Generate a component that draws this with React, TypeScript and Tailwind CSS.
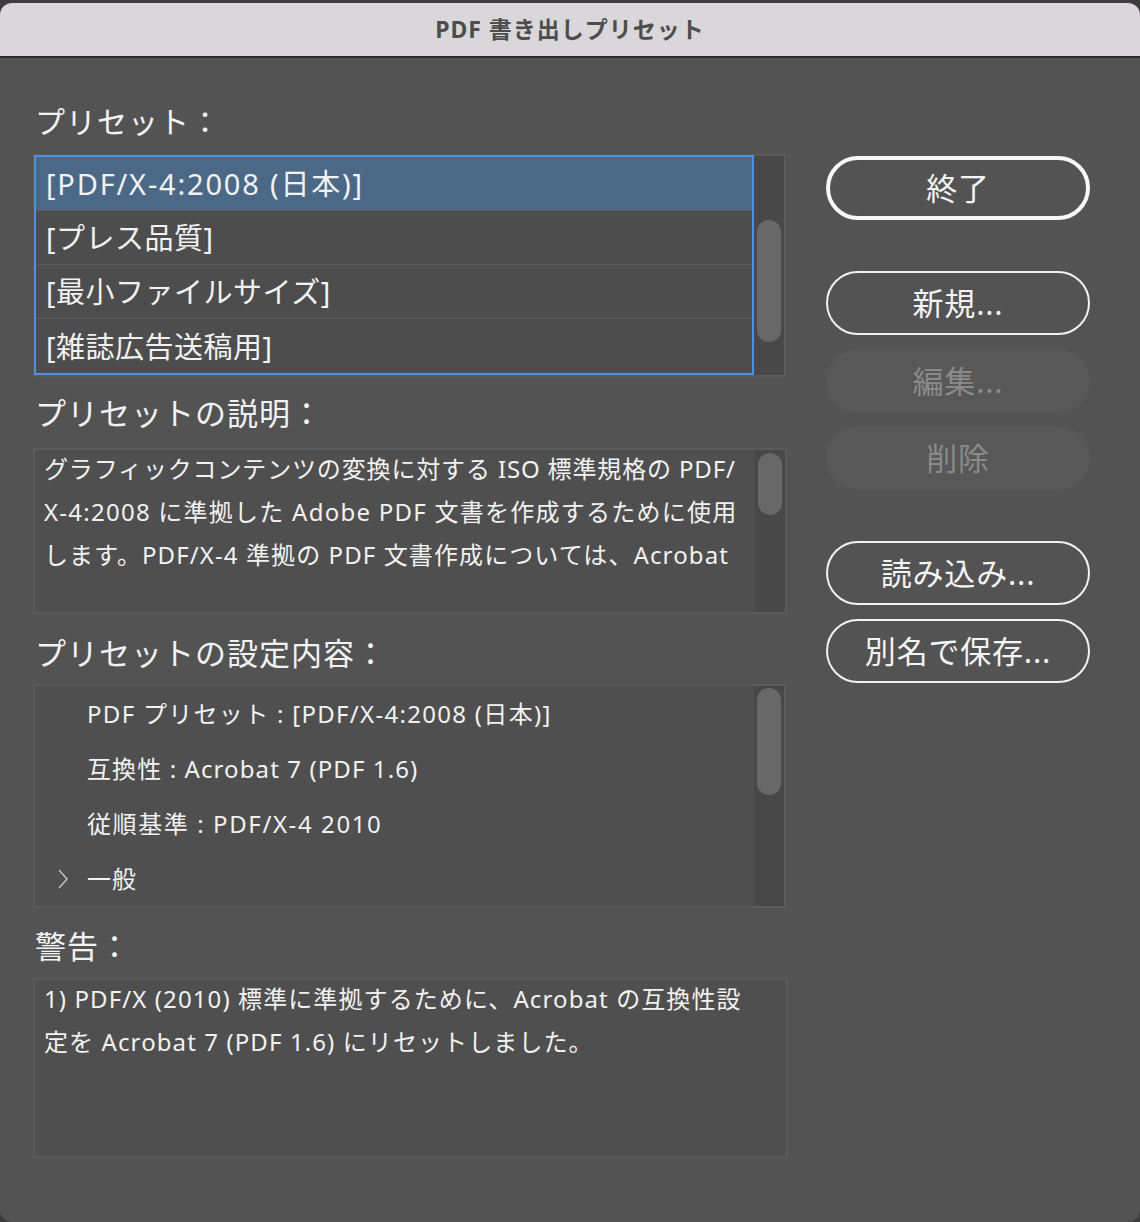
import React from "react";

function Thumb({ top, height }: { top: number; height: number }) {
  return (
    <div className="relative w-[30px] shrink-0 bg-[#484848]">
      <div
        className="absolute left-[3px] right-[3px] rounded-full bg-[#686868]"
        style={{ top, height }}
      />
    </div>
  );
}

function Btn({
  label,
  primary,
  disabled,
  className,
}: {
  label: string;
  primary?: boolean;
  disabled?: boolean;
  className?: string;
}) {
  const base =
    "h-[64px] w-[264px] rounded-full flex items-center justify-center text-[31px] tracking-[0.8px] leading-none ";
  const style = disabled
    ? "bg-[#585858] text-[#8a8a8a]"
    : primary
    ? "border-[4px] border-[#f7f7f7] text-[#f4f4f4]"
    : "border-2 border-[#f2f2f2] text-[#f4f4f4]";
  return <div className={base + style + " " + (className || "")}>{label}</div>;
}

export default function App() {
  const rows = [
    { t: "[PDF/X-4:2008 (日本)]", c: "tracking-[1.8px]" },
    { t: "[プレス品質]", c: "tracking-[0.5px]" },
    { t: "[最小ファイルサイズ]", c: "tracking-[0.5px]" },
    { t: "[雑誌広告送稿用]", c: "tracking-[0.5px]" },
  ];
  const settings = [
    { t: "PDF プリセット : [PDF/X-4:2008 (日本)]", c: "tracking-[1.3px]" },
    { t: "互換性 : Acrobat 7 (PDF 1.6)", c: "tracking-[1.1px]" },
    { t: "従順基準 : PDF/X-4 2010", c: "tracking-[1.6px]" },
  ];
  return (
    <div className="w-[1140px] h-[1222px] bg-[#3c3c3c] font-['Noto_Sans','Noto_Sans_CJK_JP',sans-serif] overflow-hidden">
      <div className="mt-[3px] h-[1219px] rounded-[12px] overflow-hidden bg-[#535353] flex flex-col">
        <div className="h-[55px] shrink-0 bg-[#d9d7d9] border-b-2 border-[#2c2c2c] flex items-center justify-center">
          <span className="text-[23px] font-bold text-[#4d4d4d] tracking-[1px]">
            PDF 書き出しプリセット
          </span>
        </div>
        <div className="flex flex-row">
          {/* left column */}
          <div className="w-[756px] ml-[33px] flex flex-col text-[#f2f2f2]">
            <div className="mt-[44px] h-[40px] leading-[40px] text-[30px] pl-[2px] tracking-[1px]">
              プリセット：
            </div>
            <div className="mt-[12px] h-[223px] w-[753px] border-2 border-[#5a5a5a] bg-[#4d4d4d] flex flex-row">
              <div className="flex-1 border-2 border-[#4a92e0] -ml-[1px] -mt-[1px] flex flex-col">
                {rows.map((r, i) => (
                  <div
                    key={r.t}
                    className={
                      "h-[54px] flex items-center pl-[10px] text-[29px] leading-none " +
                      r.c +
                      " " +
                      (i === 0 ? "bg-[#4b6886] " : "") +
                      (i < 3 ? "border-b border-[#5a5a5a]" : "")
                    }
                  >
                    {r.t}
                  </div>
                ))}
              </div>
              <Thumb top={64} height={122} />
            </div>

            <div className="mt-[16px] h-[40px] leading-[40px] text-[31px] pl-[2px] tracking-[1px]">
              プリセットの説明：
            </div>
            <div className="mt-[15px] h-[166px] w-[754px] border-2 border-[#5a5a5a] bg-[#4f4f4f] flex flex-row">
              <div className="flex-1 pl-[9px] -mt-[3px] text-[24px] leading-[43px] whitespace-nowrap overflow-hidden">
                <div className="tracking-[0.85px]">グラフィックコンテンツの変換に対する ISO 標準規格の PDF/</div>
                <div className="tracking-[1.25px]">X-4:2008 に準拠した Adobe PDF 文書を作成するために使用</div>
                <div className="tracking-[1.1px]">します。PDF/X-4 準拠の PDF 文書作成については、Acrobat</div>
              </div>
              <Thumb top={3} height={62} />
            </div>

            <div className="mt-[19px] h-[40px] leading-[40px] text-[31px] pl-[2px] tracking-[1px]">
              プリセットの設定内容：
            </div>
            <div className="mt-[11px] h-[224px] w-[753px] border-2 border-[#5a5a5a] bg-[#4f4f4f] flex flex-row">
              <div className="flex-1 flex flex-col text-[24px] leading-none">
                {settings.map((s) => (
                  <div
                    key={s.t}
                    className={"h-[55px] flex items-center pl-[52px] whitespace-nowrap " + s.c}
                  >
                    {s.t}
                  </div>
                ))}
                <div className="h-[55px] flex items-center pl-[22px] tracking-[1px]">
                  <svg width="12" height="22" viewBox="0 0 12 22" className="mr-[18px]">
                    <polyline
                      points="2,2 10,11 2,20"
                      fill="none"
                      stroke="#bdbdbd"
                      strokeWidth="1.6"
                    />
                  </svg>
                  一般
                </div>
              </div>
              <Thumb top={2} height={107} />
            </div>

            <div className="mt-[18px] h-[40px] leading-[40px] text-[31px] pl-[2px] tracking-[1px]">
              警告：
            </div>
            <div className="mt-[12px] h-[180px] w-[755px] border-2 border-[#5a5a5a] bg-[#4f4f4f]">
              <div className="pl-[9px] -mt-[3px] text-[24px] leading-[43px] whitespace-nowrap tracking-[1.1px]">
                <div>1) PDF/X (2010) 標準に準拠するために、Acrobat の互換性設</div>
                <div>定を Acrobat 7 (PDF 1.6) にリセットしました。</div>
              </div>
            </div>
          </div>

          {/* right column */}
          <div className="ml-[37px] flex flex-col">
            <Btn label="終了" primary className="mt-[98px]" />
            <Btn label="新規..." className="mt-[51px]" />
            <Btn label="編集..." disabled className="mt-[14px]" />
            <Btn label="削除" disabled className="mt-[13px]" />
            <Btn label="読み込み..." className="mt-[51px]" />
            <Btn label="別名で保存..." className="mt-[14px]" />
          </div>
        </div>
      </div>
    </div>
  );
}
